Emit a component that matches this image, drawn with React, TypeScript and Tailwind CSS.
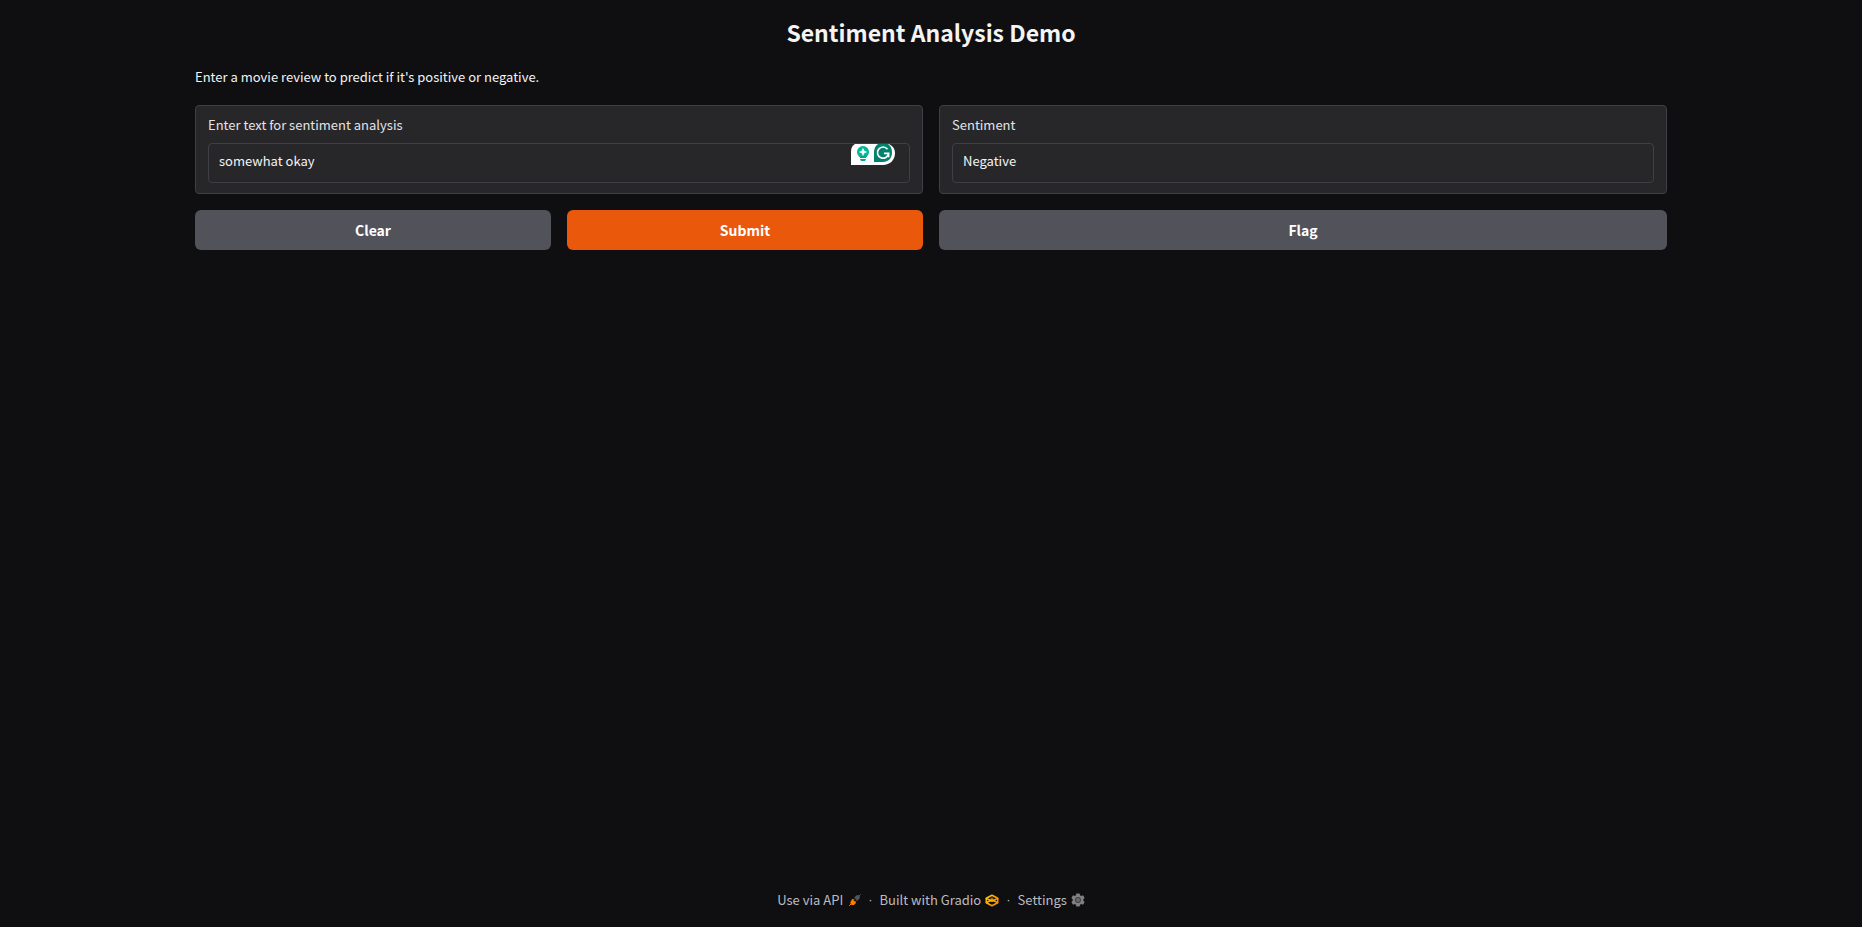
import { useState } from "react";

function PlugIcon() {
  return (
    <svg aria-hidden="true" viewBox="0 0 24 24" className="size-3">
      <path d="M23.500.5 19 5" stroke="#4b5563" strokeWidth="2" />
      <path d="M10.500 7 14 3.500c2.500-2.200 5-2 6.600-.4 1.700 1.700 1.700 4.500-.5 6.700L16.700 13.300z" fill="#4b5563" />
      <path d="M.5 23.500 5 19" stroke="#ff7c00" strokeWidth="2" />
      <path d="M6.300 9.700 14.300 17.700 11.500 20.500c-2.300 2.200-5.200 2.200-7.300.3-2-2-2-4.900.2-7.300z" fill="#ff7c00" />
      <path d="M8.500 12l2.500-2.500M12 15.500l2.500-2.500" stroke="#ff7c00" strokeWidth="1.800" />
    </svg>
  );
}

function GradioLogo() {
  return (
    <svg aria-hidden="true" viewBox="0 0 28 26" className="h-[13px] w-3.5">
      <defs>
        <linearGradient id="gradio-fill" x1="0" y1="0" x2="1" y2="1">
          <stop offset="0" stopColor="#ffd000" />
          <stop offset="1" stopColor="#ff7c00" />
        </linearGradient>
      </defs>
      <g fill="none" stroke="url(#gradio-fill)" strokeWidth="3" strokeLinejoin="round">
        <path d="M14 2.500 2.500 8.500 14 14.500l11.500-6z" />
        <path d="M14 11.500 2.500 17.500 14 23.500l11.500-6z" />
        <path d="M2.500 8.500v9M25.500 8.500v9" />
      </g>
      <path d="M14 6.500 10 8.500l4 2 4-2z" fill="#a35a00" />
    </svg>
  );
}

function GearIcon() {
  return (
    <svg aria-hidden="true" viewBox="0 0 24 24" className="size-3.5">
      <path
        fill="#808080"
        d="M9.200.8h5.600l.7 3.100 2 1.100 3.100-1 2.700 4.700L21 11v2l2.300 2.300-2.700 4.700-3.100-1-2 1.100-.7 3.100H9.200l-.7-3.100-2-1.100-3.100 1-2.700-4.700L3 13v-2L.7 8.700 3.400 4l3.100 1 2-1.100z"
      />
      <circle cx="12" cy="12" r="4.200" fill="#6b6b6b" stroke="#404040" strokeWidth="1.800" />
    </svg>
  );
}

function WritingBadge() {
  return (
    <svg aria-hidden="true" viewBox="0 0 44 21" className="absolute top-px right-[15px] h-[21px] w-11">
      <path d="M4 0h34c4 2 6 5 6 9 0 7-5 12-12 12H0V8c0-4 1-6 4-8z" fill="#fff" />
      <circle cx="12" cy="8" r="6" fill="#00b899" />
      <path d="M9 12h6v2H9zM9 15h6l-1 2h-4z" fill="#00a78b" />
      <path d="M12 4.500 13 7l2.500 1-2.500 1-1 2.500L11 9 8.500 8 11 7z" fill="#fff" stroke="#fff" strokeWidth=".6" />
      <path d="M27 0h10c3 2 4 5 4 8.500 0 6-4 9.500-9 9.500h-9V8.500C23 5 24 2 27 0z" fill="#04816d" />
      <path d="M36.500 5.200A5.600 5.600 0 1 0 37.600 9.300H33M37.600 8.500v4.700" fill="none" stroke="#fff" strokeWidth="1.700" />
    </svg>
  );
}

const panel = "rounded border border-[#3f3f46] bg-[#27272a] px-3 py-2.5";
const label = "mb-2.5 block text-[13px] leading-[17px] text-[#e4e4e7]";
const field =
  "block h-10 w-full rounded border border-[#3f3f46] bg-[#27272a] px-2.5 pt-0.5 pb-2 text-[13px] leading-5 text-[#f4f4f5] outline-none";
const button = "h-10 flex-1 rounded-md text-sm font-bold text-white";
const link = "flex items-center";
const dot = "font-['Liberation_Sans',sans-serif]";

export default function App() {
  const [text, setText] = useState("somewhat okay");
  const [sentiment, setSentiment] = useState("Negative");

  return (
    <div className="flex min-h-screen flex-col bg-[#0f0f11] font-['Noto_Sans_CJK_SC',sans-serif] text-[#f4f4f5]">
      <main className="mx-auto w-full max-w-[1536px] grow px-8 pt-4">
        <h1 className="text-center text-[23px] leading-8 font-bold">Sentiment Analysis Demo</h1>
        <p className="mt-[18px] text-[13px] leading-[22px]">Enter a movie review to predict if it's positive or negative.</p>
        <div className="mt-[17px] grid grid-cols-2 gap-4">
          <section className="flex flex-col gap-4">
            <div className={panel}>
              <label htmlFor="review" className={label}>Enter text for sentiment analysis</label>
              <div className="relative">
                <input id="review" className={field} value={text} onChange={(e) => setText(e.target.value)} />
                <WritingBadge />
              </div>
            </div>
            <div className="flex gap-4">
              <button
                type="button"
                className={`${button} bg-[#52525b]`}
                onClick={() => {
                  setText("");
                  setSentiment("");
                }}
              >
                Clear
              </button>
              <button type="button" className={`${button} bg-[#ea580c]`}>Submit</button>
            </div>
          </section>
          <section className="flex flex-col gap-4">
            <div className={panel}>
              <label htmlFor="sentiment" className={label}>Sentiment</label>
              <input id="sentiment" className={field} value={sentiment} readOnly />
            </div>
            <div className="flex">
              <button type="button" className={`${button} bg-[#52525b]`}>Flag</button>
            </div>
          </section>
        </div>
      </main>
      <footer className="flex items-center justify-center gap-[7px] pb-[17px] text-[13px] leading-5 text-[#bbbbc2]">
        <a href="#api" className={`${link} gap-1.5`}>Use via API <PlugIcon /></a>
        <span className={dot}>·</span>
        <a href="#gradio" className={`${link} gap-1`}>Built with Gradio <GradioLogo /></a>
        <span className={dot}>·</span>
        <a href="#settings" className={`${link} gap-1`}>Settings <GearIcon /></a>
      </footer>
    </div>
  );
}
